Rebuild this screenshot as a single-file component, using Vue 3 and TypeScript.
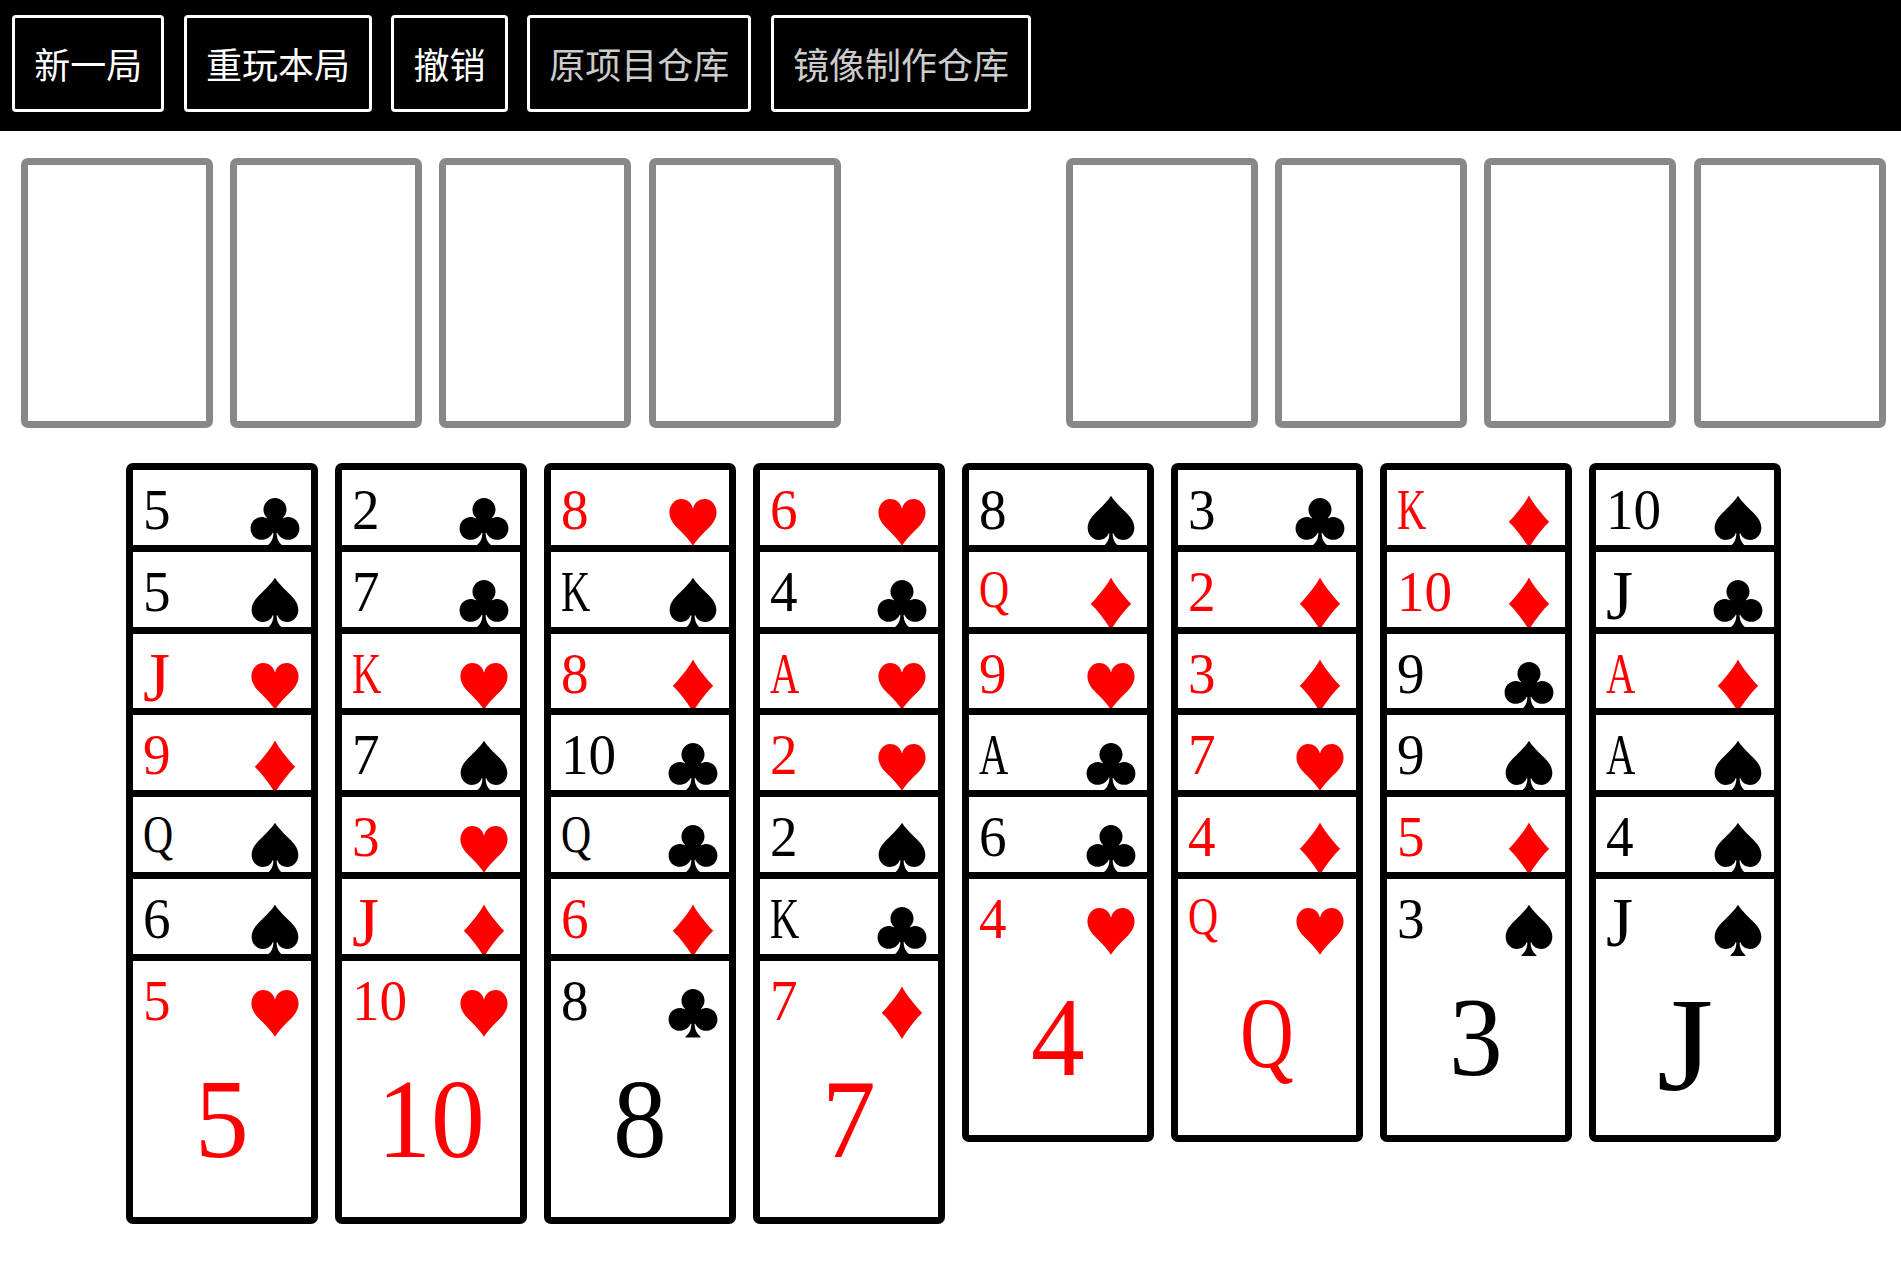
<script setup lang="ts">
type Suit = 'c' | 's' | 'h' | 'd'
interface Card { rank: string; suit: Suit }

const glyphs: Record<Suit, string> = { c: '♣', s: '♠', h: '♥', d: '♦' }

const layouts: string[] = [
  '5c 5s Jh 9d Qs 6s 5h',
  '2c 7c Kh 7s 3h Jd 10h',
  '8h Ks 8d 10c Qc 6d 8c',
  '6h 4c Ah 2h 2s Kc 7d',
  '8s Qd 9h Ac 6c 4h',
  '3c 2d 3d 7h 4d Qh',
  'Kd 10d 9c 9s 5d 3s',
  '10s Jc Ad As 4s Js',
]

const piles: Card[][] = layouts.map((line) =>
  line.split(' ').map((t) => ({ rank: t.slice(0, -1), suit: t.slice(-1) as Suit })),
)

const isRed = (s: Suit): boolean => s === 'h' || s === 'd'
const rankShape = (r: string): string => {
  if (r === 'J') return 'j'
  if (r === 'Q') return 'q'
  return 'KA'.includes(r) ? 'narrow' : 'digit'
}
const actions: string[] = ['新一局', '重玩本局', '撤销']
const links: string[] = ['原项目仓库', '镜像制作仓库']
</script>

<template>
  <div class="page">
    <header class="bar">
      <button v-for="a in actions" :key="a" class="btn" type="button">{{ a }}</button>
      <a v-for="l in links" :key="l" class="btn link" href="#">{{ l }}</a>
    </header>

    <section class="slots">
      <div class="slot-group">
        <div v-for="n in 4" :key="n" class="slot"></div>
      </div>
      <div class="slot-group">
        <div v-for="n in 4" :key="n" class="slot"></div>
      </div>
    </section>

    <section class="piles">
      <div v-for="(pile, i) in piles" :key="i" class="pile">
        <div
          v-for="(card, j) in pile"
          :key="j"
          class="card"
          :class="{ red: isRed(card.suit) }"
        >
          <div class="head">
            <span class="rank" :class="rankShape(card.rank)">{{ card.rank }}</span>
            <span class="suit">{{ glyphs[card.suit] }}</span>
          </div>
          <div v-if="j === pile.length - 1" class="big" :class="rankShape(card.rank)">{{ card.rank }}</div>
        </div>
      </div>
    </section>
  </div>
</template>

<style>
html, body { background: #fff; }
</style>

<style scoped>
.page {
  font-family: "Liberation Serif", serif;
  color: #000;
}
.bar {
  height: 131px;
  box-sizing: border-box;
  background: #000;
  display: flex;
  align-items: flex-start;
  gap: 19.3px;
  padding: 15px 0 0 12px;
}
.btn {
  height: 97px;
  box-sizing: border-box;
  display: flex;
  align-items: center;
  padding: 0 19.2px 2px;
  background: #000;
  border: 3px solid #fff;
  border-radius: 4px;
  color: #fff;
  font-family: "Noto Sans CJK SC", sans-serif;
  font-size: 36px;
  line-height: 1;
  text-decoration: none;
}
.link { color: #ccc; }

.slots {
  display: flex;
  gap: 225.4px;
  margin: 27px 0 0 21px;
}
.slot-group {
  display: flex;
  gap: 17.2px;
}
.slot {
  width: 192px;
  height: 270px;
  box-sizing: border-box;
  border: 7px solid #888;
  border-radius: 7px;
}

.piles {
  display: flex;
  align-items: flex-start;
  gap: 17px;
  margin: 35px 0 0 126px;
}
.pile {
  width: 192px;
  display: flex;
  flex-direction: column;
}
.card {
  height: 270px;
  box-sizing: border-box;
  background: #fff;
  border: 7px solid #000;
  border-radius: 7px;
  position: relative;
}
.card + .card { margin-top: -188.2px; }
.red { color: #f00; }

.head {
  height: 75px;
  display: flex;
  justify-content: space-between;
  padding: 0 8px 0 10px;
}
.rank {
  font-size: 58px;
  line-height: 71px;
  margin-top: 4px;
  height: 71px;
  transform-origin: left 17px;
}
.rank.digit { transform: scaleX(0.95); }
.rank.narrow { transform: scaleX(0.7); }
.rank.q { transform: scale(0.72, 0.9); }
.rank.j { transform: scale(1.2, 1.2); }
.suit {
  font-family: "Noto Sans CJK SC", sans-serif;
  font-size: 56px;
  line-height: 49px;
  height: 49px;
  margin-top: 24px;
}
.big {
  text-align: center;
  font-size: 112px;
  line-height: 112px;
  margin-top: 27px;
  transform-origin: center 20px;
}
.big.digit { transform: scaleX(0.96); }
.big.narrow { transform: scaleX(0.7); }
.big.q { transform: scale(0.66, 0.9); }
.big.j { transform: scale(1.3, 1.2); }
</style>
